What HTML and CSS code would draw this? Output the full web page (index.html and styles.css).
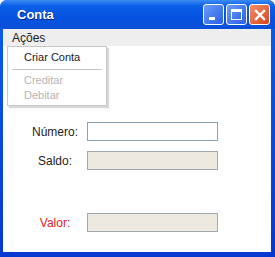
FILE: index.html
```html
<!DOCTYPE html>
<html lang="pt">
<head>
    <meta charset="UTF-8">
    <title>Conta</title>
    <link rel="stylesheet" href="styles.css">
</head>
<body>
    <div class="window">
        <div class="titlebar">
            <span class="title">Conta</span>
            <div class="controls">
                <span class="btn btn-min"><i></i></span>
                <span class="btn btn-max"><i></i></span>
                <span class="btn btn-close">
                    <svg width="12" height="12" viewBox="0 0 12 12"><path d="M2 2 L10 10 M10 2 L2 10" stroke="#fff" stroke-width="2.4" stroke-linecap="square"/></svg>
                </span>
            </div>
        </div>
        <div class="menubar">
            <span class="menu-item">Ações</span>
        </div>
        <div class="content">
            <ul class="dropdown">
                <li>Criar Conta</li>
                <li class="sep"></li>
                <li class="disabled">Creditar</li>
                <li class="disabled">Debitar</li>
            </ul>
            <div class="form">
                <div class="row">
                    <label>Número:</label>
                    <input type="text" class="field">
                </div>
                <div class="row">
                    <label>Saldo:</label>
                    <input type="text" class="field readonly">
                </div>
                <div class="row row-valor">
                    <label class="red">Valor:</label>
                    <input type="text" class="field readonly">
                </div>
            </div>
        </div>
    </div>
</body>
</html>
```

FILE: styles.css
```css
body {
    margin: 0;
    padding: 0;
    font-family: "Liberation Sans", Arial, sans-serif;
    font-size: 12px;
}

.window {
    width: 275px;
    height: 257px;
    box-sizing: border-box;
    background: linear-gradient(#0a5fe8, #0838d0);
    border-radius: 7px 7px 0 0;
    padding: 0 4px 5px 3px;
    display: flex;
    flex-direction: column;
}

.titlebar {
    height: 29px;
    display: flex;
    align-items: center;
    justify-content: space-between;
    background: linear-gradient(#3d8cf5 0%, #0a5fe8 20%, #0553e0 60%, #0a4fd8 100%);
    margin: 0 -4px 0 -3px;
    padding: 0 5px 0 17px;
    border-radius: 7px 7px 0 0;
}

.title {
    color: #fff;
    font-weight: bold;
    font-size: 13px;
    text-shadow: 1px 1px 0 #0a2a8a;
}

.controls {
    display: flex;
    gap: 2px;
}

.btn {
    width: 21px;
    height: 21px;
    box-sizing: border-box;
    border: 1px solid #fff;
    border-radius: 3px;
    background: linear-gradient(135deg, #6d9cf8, #2660e6);
    position: relative;
    display: flex;
    align-items: center;
    justify-content: center;
}

.btn-min i {
    position: absolute;
    left: 5px;
    bottom: 4px;
    width: 6px;
    height: 3px;
    background: #fff;
}

.btn-max i {
    width: 9px;
    height: 7px;
    border: 1px solid #fff;
    border-top-width: 3px;
}

.btn-close {
    background: linear-gradient(135deg, #f0906a, #d8441a);
}

.menubar {
    height: 17px;
    background: #eeeeee;
    display: flex;
    align-items: center;
    padding-left: 9px;
}

.menu-item {
    color: #222;
}

.content {
    flex: 1;
    background: #fff;
    position: relative;
}

.dropdown {
    position: absolute;
    left: 4px;
    top: 0;
    width: 98px;
    margin: 0;
    padding: 3px 0 2px;
    list-style: none;
    background: #fff;
    border: 1px solid #c8c8c8;
    box-shadow: 2px 2px 1px #d8d8d8;
}

.dropdown li {
    padding: 1px 0 2px 16px;
    color: #222;
    font-size: 11px;
}

.dropdown li.sep {
    height: 1px;
    background: #c8c8c8;
    margin: 4px 4px 3px;
    padding: 0;
}

.dropdown li.disabled {
    color: #b4b4b4;
}

.form {
    padding-top: 76px;
}

.row {
    display: flex;
    align-items: center;
    height: 19px;
    margin-bottom: 10px;
}

.row label {
    width: 64px;
    padding-left: 20px;
    text-align: center;
    color: #222;
}

.row-valor {
    margin-top: 43px;
}

.red {
    color: #e02020 !important;
}

.field {
    width: 131px;
    height: 19px;
    box-sizing: border-box;
    border: 1px solid #8ea0b8;
    margin: 0;
    padding: 0;
}

.field.readonly {
    background: #ede9e0;
    border-color: #a0a8b0;
}
```
